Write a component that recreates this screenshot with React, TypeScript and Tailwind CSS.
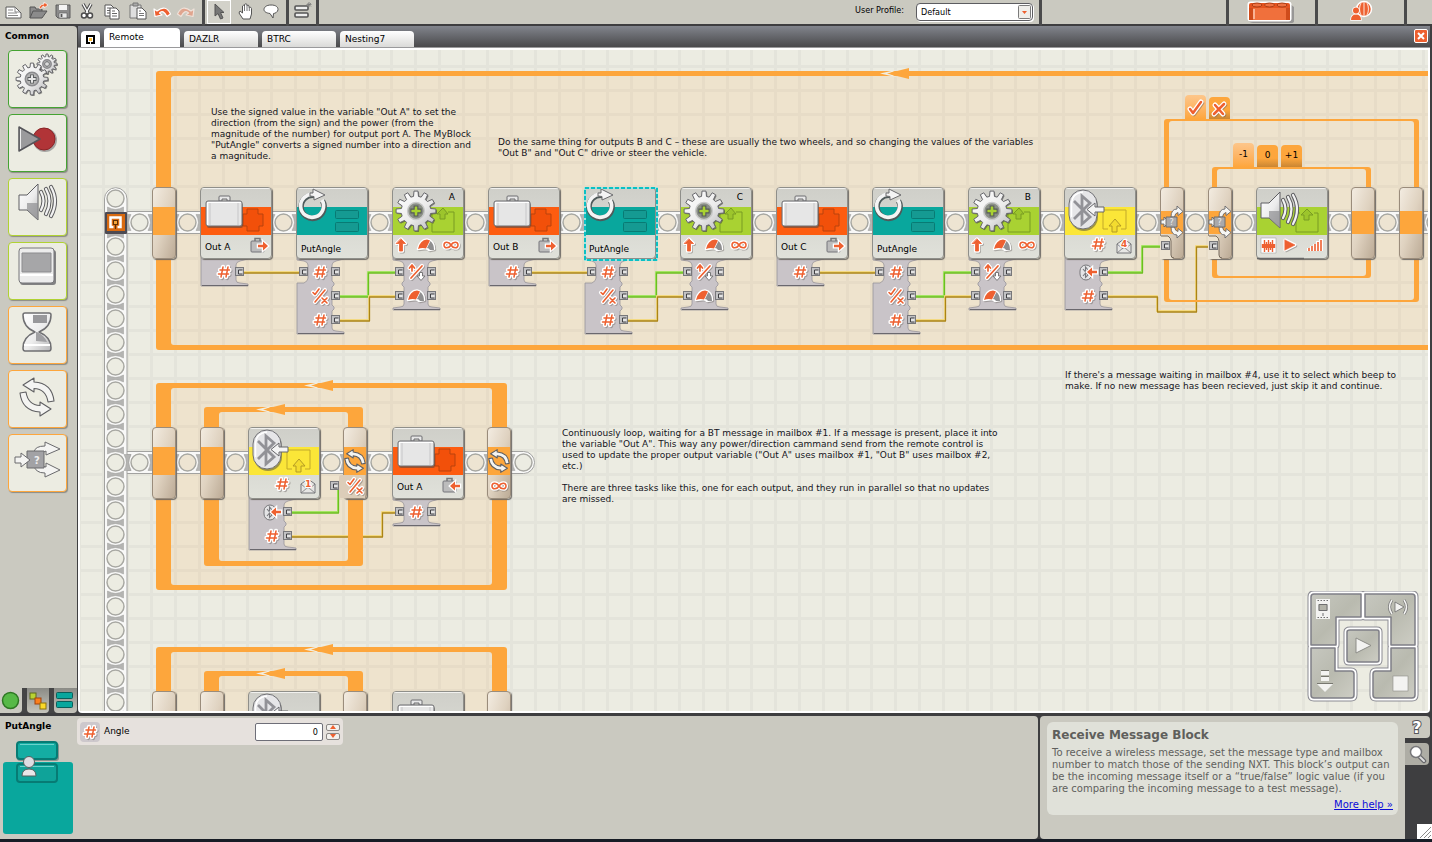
import React from "react";

/* ---------- shared values ---------- */

const ORANGE = "#fda63c";
const INK = "#ee6030";
const TINT = "#ede4d2";
const PAPER = "#ecece2";
const TEAL = "#09a79d";

const ORIGIN = { x: 80, y: 50 };
const at = (x: number, y: number) => ({ left: x - ORIGIN.x, top: y - ORIGIN.y });

/* ---------- small glyphs, centred on 0,0 ---------- */

type GlyphProps = { x: number; y: number };

const outlined = {
  paintOrder: "stroke",
  stroke: "#fff",
  strokeWidth: 3,
  strokeLinejoin: "round" as const,
  fontFamily: "DejaVu Sans, sans-serif",
  textAnchor: "middle" as const,
};

const Hash = ({ x, y }: GlyphProps) => (
  <g transform={`translate(${x} ${y})`} fill="none" strokeLinecap="round">
    {[
      { c: "#6f6a68", w: 4.2, o: 0.5, t: "translate(1 1)" },
      { c: "#fff", w: 4.4, o: 1, t: "" },
      { c: INK, w: 1.5, o: 1, t: "" },
    ].map((l) => (
      <path key={l.c} d="M-1-5L-3 5M4-5L2 5M-4-2H5.500M-5.500 2H4.500" stroke={l.c} strokeWidth={l.w} opacity={l.o} transform={l.t || undefined} />
    ))}
  </g>
);

const Outline = ({ d, x, y, fill = "none", w = 2 }: GlyphProps & { d: string; fill?: string; w?: number }) => (
  <g transform={`translate(${x} ${y})`} strokeLinejoin="round" strokeLinecap="round">
    <path d={d} transform="translate(1 1)" stroke="#6f6a68" strokeWidth={w + 2} fill={fill} opacity=".5" />
    <path d={d} stroke="#fff" strokeWidth={w + 2.5} fill={fill} />
    <path d={d} stroke={INK} strokeWidth={w} fill={fill} />
  </g>
);

const UpArrow = (p: GlyphProps) => <Outline {...p} d="M0-6L4.500-1.500H1.500V6H-1.500V-1.500H-4.500Z" fill={INK} w={0.8} />;
const Infinity8 = (p: GlyphProps) => <Outline {...p} d="M0 0C-2-3.500-7-4-7 0S-2 3.500 0 0S7-4 7 0S2 3.500 0 0Z" w={1.6} />;
const Gauge = ({ x, y }: GlyphProps) => (
  <g transform={`translate(${x} ${y})`} strokeLinejoin="round">
    <path d="M-8 4Q-6-5 1-5.500Q8-4 8 4L3 5L0 3Z" fill="#77726f" stroke="#77726f" strokeWidth="2.500" opacity=".5" transform="translate(1 1)" />
    <path d="M-8 4Q-6-5 1-5.500Q8-4 8 4L3 5L0 3Z" fill="#fff" stroke="#fff" strokeWidth="2.500" />
    <path d="M4.500-4Q8-1 8 5H4Q3 3 1 3Z" fill="#8f8f90" />
    <path d="M-8 4Q-6-5 1-5.500L4-4.500L0 3.500Q-4 2.500-8 4Z" fill={INK} />
  </g>
);
const TrueFalse = ({ x, y }: GlyphProps) => <Outline x={x} y={y} d="M-7-3.500L-5-1.500L-1-7M-5 6L5-6M2 2L7 7M7 2L2 7" w={1.6} />;
const UpDown = ({ x, y }: GlyphProps) => (
  <g>
    <Outline x={x} y={y} d="M-5 6L6-6M-4-1V-6M-6.500-4L-4-7L-1.500-4" w={1.7} />
    <path transform={`translate(${x + 5} ${y + 4})`} d="M-1.500-3.500H1.500V0H4L0 4.500L-4 0H-1.500Z" fill="#fff" stroke="#777" />
  </g>
);
const OrangeArrow = ({ x, y, flip = false }: GlyphProps & { flip?: boolean }) => (
  <g transform={`translate(${x} ${y})${flip ? " scale(-1 1)" : ""}`}>
    <path d="M-5-1.200H0V-4.500L5 0L0 4.500V1.200H-5Z" fill={INK} stroke="#fff" strokeWidth="2.500" paintOrder="stroke" />
  </g>
);
const MiniCase = ({ x, y, flip }: GlyphProps & { flip?: boolean }) => (
  <g transform={`translate(${x} ${y})`}>
    <path d="M-5-4V-6.500H0V-4" fill="none" stroke="#777" strokeWidth="1.500" />
    <rect x="-9" y="-4" width="13" height="11" rx="1" fill="#bcbcbc" stroke="#75757a" />
    <OrangeArrow x={3} y={1} flip={flip} />
  </g>
);
const Envelope = ({ x, y, n }: GlyphProps & { n: string }) => (
  <g transform={`translate(${x} ${y})`}>
    <path d="M-7-1L0-6L7-1V8H-7Z" fill="#e6e6e4" stroke="#77777a" />
    <path d="M-7 8L-1 3H1L7 8M-7-1L-1 4M7-1L1 4" fill="none" stroke="#77777a" strokeWidth=".8" />
    <text {...outlined} strokeWidth={2.4} x="0" y="2" fontSize="9" fontWeight="bold" fill={INK}>{n}</text>
  </g>
);
const MiniBluetooth = ({ x, y }: GlyphProps) => (
  <g transform={`translate(${x} ${y})`}>
    <rect x="-8" y="-7" width="12" height="15" rx="6" fill="#e4e4e6" stroke="#77777a" />
    <path d="M-5-3L0 3L-2.500 5.500V-5L0-2L-5 4" fill="none" stroke="#77777c" strokeWidth="1.100" />
    <OrangeArrow x={4} y={0} flip />
  </g>
);
const SoundGlyphs = () => (
  <g>
    <rect x="5" y="51" width="15" height="15" fill="#fff" stroke="#999" strokeWidth=".5" />
    <path
      d="M6.500 57V61M8.500 53V65M10.500 55V63M12.500 53V65M14.500 55V63M16.500 53V65M18.500 57V61"
      fill="none"
      stroke={INK}
      strokeWidth="1.400"
    />
    <path d="M6 59H19" stroke={INK} strokeWidth="4" />
    <Outline x={33} y={58} d="M-4-5L6 0L-4 5Z" fill={INK} w={0.6} />
    <path d="M53 64V61M56 64V59M59 64V57M62 64V54M65 64V52" stroke="#fff" strokeWidth="4" />
    <path d="M53 64V61M56 64V59M59 64V57M62 64V55M65 64V53" stroke={INK} strokeWidth="1.600" />
  </g>
);

/* ---------- large drawings ---------- */

function gearPath(cx: number, cy: number, outer: number, inner: number, teeth: number) {
  const points: string[] = [];
  for (let i = 0; i < teeth; i++) {
    const step = (Math.PI * 2) / teeth;
    const a = i * step - Math.PI / 2;
    [[-0.32, inner], [-0.19, outer], [0.19, outer], [0.32, inner]].forEach(([k, r]) => {
      points.push(`${(cx + Math.cos(a + k * step) * r).toFixed(2)} ${(cy + Math.sin(a + k * step) * r).toFixed(2)}`);
    });
  }
  return `M${points.join("L")}Z`;
}

const Gear = ({ x, y, r, hub = "#b4b4b4", plus = "#e8e8e8", ring = "#8b8b8e" }: { x: number; y: number; r: number; hub?: string; plus?: string; ring?: string }) => (
  <g>
    <path d={gearPath(x + 1, y + 1, r, r * 0.74, 12)} fill="#444" opacity=".6" />
    <path d={gearPath(x, y, r, r * 0.74, 12)} fill="url(#metal)" stroke="#66666a" strokeLinejoin="round" />
    <circle cx={x} cy={y} r={r * 0.42} fill={hub} stroke={ring} strokeWidth="1.500" />
    <path d={`M${x - r * 0.28} ${y}H${x + r * 0.28}M${x} ${y - r * 0.28}V${y + r * 0.28}`} stroke="#55585a" strokeWidth={r * 0.24} />
    <path d={`M${x - r * 0.23} ${y}H${x + r * 0.23}M${x} ${y - r * 0.23}V${y + r * 0.23}`} stroke={plus} strokeWidth={r * 0.13} />
  </g>
);

const Suitcase = () => (
  <g stroke="#6d6d70">
    <path d="M19 14V10Q19 9 20 9H29Q30 9 30 10V14H27V12H22V14Z" fill="#e8e8e8" />
    <rect x="7" y="16" width="36" height="25" rx="2" fill="#444" opacity=".5" stroke="none" />
    <rect x="6" y="14" width="36" height="25" rx="2" fill="#e6e6e6" />
    <path d="M10 15V38M38 15V38" stroke="#c6c6c8" />
    <path d="M7 15.500H41M7.500 15V38" stroke="#fff" />
  </g>
);

const Redo = () => (
  <g fill="none" strokeLinejoin="round">
    <path d="M18 7.500A11.500 11.500 0 1 0 26 13" transform="translate(.5 1)" stroke="#4f5a5a" strokeWidth="5.500" />
    <path d="M18 7.500A11.500 11.500 0 1 0 26 13" stroke="#f4f4f4" strokeWidth="3.600" />
    <path d="M17 2L29 8L18 13V9.500L14 9V6L17 6Z" fill="#f4f4f4" stroke="#6a6a6d" />
  </g>
);

const Bluetooth = () => (
  <g>
    <rect x="6" y="5" width="28" height="39" rx="14" fill="#444" opacity=".5" />
    <rect x="5" y="3" width="28" height="39" rx="14" fill="#e6e6e8" stroke="#707074" />
    <path d="M7.500 30V16Q8.500 6 19 5" fill="none" stroke="#fff" strokeWidth="1.500" />
    <path d="M10 14L26 30L18 37V9L26 16L10 32" fill="none" stroke="#929297" strokeWidth="2.800" />
    <path d="M40 20V25H31V29L23 22.500L31 16V20Z" fill="#f4f4f4" stroke="#66666a" />
  </g>
);

const Speaker = () => (
  <g>
    <path d="M27 13Q32 22 27 31M32 10Q39 22 32 35M37 8Q45 22 37 37" fill="none" stroke="#5d5d60" strokeWidth="4.200" strokeLinecap="round" />
    <path d="M27 13Q32 22 27 31M32 10Q39 22 32 35M37 8Q45 22 37 37" fill="none" stroke="#f2f2f2" strokeWidth="2.200" strokeLinecap="round" />
    <path d="M5 16H13L24 5V41L13 31H5Z" fill="url(#metal)" stroke="#5f5f62" strokeLinejoin="round" />
    <path d="M13 31L24 41V24H13Z" fill="#8f8f92" opacity=".7" />
  </g>
);

const CycleArrows = ({ x, y, s = 1 }: GlyphProps & { s?: number }) => (
  <g transform={`translate(${x} ${y}) scale(${s})`} strokeLinejoin="round">
    {[0, 180].map((turn) => (
      <path
        key={turn}
        transform={`rotate(${turn})`}
        d="M-14-12L-3-19V-15Q15-14 17 4L11 5Q9-8-3-8.500V-5Z"
        fill="#f4f4f2"
        stroke="#5f5f62"
        strokeWidth={1.1 / s}
      />
    ))}
  </g>
);

const Fork = ({ x, y }: GlyphProps) => (
  <g transform={`translate(${x} ${y})`} strokeLinejoin="round" fill="#f6f6f4" stroke="#66666a" strokeWidth=".9">
    <path d="M-1-5Q-1-13 5-13V-16L11-10.500L6-6.500V-9.500Q3-9 2.500-5Z" />
    <path d="M-1 5Q-1 13 5 13V16L11 10.500L6 6.500V9.500Q3 9 2.500 5Z" />
    <path d="M-11-2H-8V-5L-3 0L-8 5V2H-11Z" />
    <rect x="-6" y="-5" width="11" height="10" fill="#a9a9ab" />
    <text x="-.5" y="3" fontSize="8" textAnchor="middle" fill="#eee" stroke="none" fontFamily="DejaVu Sans, sans-serif">?</text>
  </g>
);

/* ---------- canvas background drawing ---------- */

const Hole = ({ x, y, tinted }: GlyphProps & { tinted?: boolean }) => (
  <g>
    <circle cx={x} cy={y} r="10" fill="#fff" />
    <circle cx={x} cy={y} r="8.500" fill={tinted ? TINT : PAPER} stroke="#a8a8a2" strokeWidth="1.500" />
  </g>
);

const Rung = ({ x, y, turn }: GlyphProps & { turn?: boolean }) => (
  <path
    transform={`translate(${x} ${y})${turn ? " rotate(90)" : ""}`}
    d="M-8-3.500Q0 1 8-3.500V3.500Q0-1-8 3.500Z"
    fill="#b4b4b2"
    stroke="#9d9d9b"
    strokeWidth=".5"
  />
);

const steps = (n: number) => Array.from({ length: n }, (_, i) => i);

const Row = ({ y, holes, tintedFrom, tintedTo, closed }: { y: number; holes: number; tintedFrom: number; tintedTo: number; closed?: boolean }) => {
  const end = 139.5 + (holes - 1) * 24 + 12;
  return (
    <g>
      <path d={closed ? `M122 ${y - 11}H${end - 12}A11 11 0 0 1 ${end - 12} ${y + 11}H122Z` : `M122 ${y - 11}H${end}V${y + 11}H122Z`} fill="#f8f8f7" stroke="#a2a2a0" />
      {steps(holes).map((i) => (
        <Rung key={i} x={127.5 + i * 24} y={y} turn />
      ))}
      {steps(holes).map((i) => {
        const x = 139.5 + i * 24;
        return <Hole key={i} x={x} y={y} tinted={x > tintedFrom && x < tintedTo} />;
      })}
    </g>
  );
};

const Spine = () => (
  <g>
    <path d="M104.500 800V199A11 11 0 0 1 127 199V800" fill="#f8f8f7" stroke="#a2a2a0" />
    {steps(22).map((i) => (
      <Rung key={i} x={115.5} y={210.5 + i * 24} />
    ))}
    {steps(22).map((i) => (
      <Hole key={i} x={115.5} y={198.5 + i * 24} />
    ))}
  </g>
);

const Arrow = ({ x, y }: GlyphProps) => (
  <g>
    <path d={`M${x - 29} ${y}L${x - 11} ${y - 4}L${x - 20} ${y}L${x - 11} ${y + 4}Z`} fill="#f2eee0" />
    <path d={`M${x - 22} ${y}L${x} ${y - 5.5}V${y + 5.5}Z`} fill={ORANGE} />
  </g>
);

type FrameProps = { x: number; y: number; w: number; h: number; side: number; edge: number; tint?: boolean; arrow?: number };

const Frame = ({ x, y, w, h, side, edge, tint, arrow }: FrameProps) => {
  const r = 3;
  const ix = x + side, iy = y + edge, iw = w - side * 2, ih = h - edge * 2;
  return (
    <g>
      {tint && <rect x={ix} y={iy} width={iw} height={ih} fill={ORANGE} opacity=".12" />}
      <path
        fillRule="evenodd"
        fill={ORANGE}
        d={`M${x + r} ${y}H${x + w - r}Q${x + w} ${y} ${x + w} ${y + r}V${y + h - r}Q${x + w} ${y + h} ${x + w - r} ${y + h}H${x + r}Q${x} ${y + h} ${x} ${y + h - r}V${y + r}Q${x} ${y} ${x + r} ${y}Z
        M${ix + r} ${iy}H${ix + iw - r}Q${ix + iw} ${iy} ${ix + iw} ${iy + r}V${iy + ih - r}Q${ix + iw} ${iy + ih} ${ix + iw - r} ${iy + ih}H${ix + r}Q${ix} ${iy + ih} ${ix} ${iy + ih - r}V${iy + r}Q${ix} ${iy} ${ix + r} ${iy}Z`}
      />
      {arrow && <Arrow x={arrow} y={y + edge / 2} />}
    </g>
  );
};

const Wire = ({ d, tone }: { d: string; tone: "green" | "gold" }) => (
  <g fill="none" strokeLinejoin="round">
    <path d={d} transform="translate(-.5 -.5)" stroke={tone === "green" ? "#a5e564" : "#f3d980"} strokeWidth="2" />
    <path d={d} transform="translate(0 .5)" stroke={tone === "green" ? "#6cbf20" : "#ab8416"} strokeWidth="1.300" />
  </g>
);

const Hub = () => (
  <g>
    <rect x="105" y="212" width="22" height="22" rx="1" fill="#4c4a52" />
    <rect x="107" y="214" width="18" height="17" fill="#d96a10" />
    <path d="M113.500 227H110.500V217.500H120.500V227H117.500" fill="none" stroke="#fff" strokeWidth="2.500" />
    <rect x="113.500" y="220.500" width="4" height="4" fill="#f3a63c" stroke="#5f3005" />
    <path d="M115.500 225V229" stroke="#5f3005" />
  </g>
);

const Backdrop = () => (
  <svg className="absolute inset-0 h-full w-full" aria-hidden="true">
    <defs>
      <linearGradient id="metal" x1="0" y1="0" x2="1" y2="1">
        <stop offset="0" stopColor="#ffffff" />
        <stop offset=".55" stopColor="#ececec" />
        <stop offset="1" stopColor="#b5b5b7" />
      </linearGradient>
    </defs>
    <g transform={`translate(${-ORIGIN.x} ${-ORIGIN.y})`}>
      <Frame x={156} y={71} w={2400} h={279} side={15} edge={5} tint arrow={909} />
      <Frame x={156} y={383} w={351} h={207} side={15} edge={5} tint arrow={333} />
      <Frame x={156} y={647} w={351} h={207} side={15} edge={5} tint arrow={333} />
      <Row y={222.5} holes={90} tintedFrom={160} tintedTo={3000} />
      <Row y={462.5} holes={17} tintedFrom={160} tintedTo={500} closed />
      <Spine />
      <Rung x={127.5} y={462.5} turn />
      <Hub />
      {[0, 96 * 3, 96 * 6].map((dx) => (
        <g key={dx}>
          <Wire tone="gold" d={`M${dx + 242} 272.500H${dx + 302}`} />
          <Wire tone="green" d={`M${dx + 338} 296.500H${dx + 368.5}V272.500H${dx + 398}`} />
          <Wire tone="gold" d={`M${dx + 338} 320.500H${dx + 369.5}V296.500H${dx + 398}`} />
        </g>
      ))}
      <Wire tone="gold" d="M1106 296.500H1157.500V311.500H1196.500V246.500H1214" />
      <Wire tone="gold" d="M290 536.500H382.500V512.500H398" />
      <Frame x={204} y={407} w={159} h={159} side={15} edge={5} arrow={285} />
      <Frame x={204} y={671} w={159} h={159} side={15} edge={5} arrow={285} />
      <Wire tone="green" d="M290 512.500H338.500V488" />
      <Frame x={1164} y={119} w={255} h={183} side={5} edge={2} />
      <Frame x={1212} y={167} w={159} h={111} side={5} edge={2} />
      <Wire tone="green" d="M1106 272.500H1142.500V246.500H1166" />
    </g>
  </svg>
);

/* ---------- blocks ---------- */

type PlugShape = "right" | "mixed" | "both";

function plugPath(rows: number, shape: PlugShape) {
  const H = 31 + 24 * (rows - 1);
  const gaps = steps(rows - 1).map((i) => 29 + i * 24);
  const right = gaps.map((g) => `V${g - 3}L38 ${g - 1}V${g + 1}L36 ${g + 3}`).join("");
  let left = "V0";
  if (shape === "mixed") left = "V28H8Q12 26 12 23V10Q12 7 8 6L1 5V0";
  if (shape === "both") {
    left = `V${H - 2}L8 ${H - 3}Q12 ${H - 3} 12 ${H - 6}` + [...gaps].reverse().map((g) => `V${g + 3}L10 ${g + 1}V${g - 1}L12 ${g - 3}`).join("") + "V10Q12 7 8 6L1 5V0";
  }
  return `M1 0H48V4L40 6Q36 7 36 10${right}V${H - 6}Q36 ${H - 3} 40 ${H - 3}L48 ${H - 2}V${H}H1${left}Z`;
}

const Port = ({ x, y }: GlyphProps) => (
  <g transform={`translate(${x} ${y})`}>
    <rect x="-4.500" y="-4.500" width="8" height="8" fill="#c2c2c4" stroke="#77777a" />
    <path d="M2.500-2H-1.500V2H2.500" fill="#e4e4e4" stroke="#3f3f43" />
  </g>
);

const Plug = ({ rows, shape, icons }: { rows: number; shape: PlugShape; icons: React.FC<GlyphProps>[] }) => (
  <svg className="absolute left-0 top-[68px]" width="56" height="84" aria-hidden="true">
    <path d={plugPath(rows, shape)} fill="#c9c4c8" stroke="#98949a" strokeWidth=".8" />
    <path d={`M2 ${30 + 24 * (rows - 1)}.500H48`} stroke="#6a686e" />
    {steps(rows).map((i) => {
      const Icon = icons[i];
      const hasLeft = shape === "both" || (shape === "mixed" && i === 0);
      return (
        <g key={i}>
          <Port x={40} y={17 + i * 24} />
          {hasLeft && <Port x={8} y={17 + i * 24} />}
          <Icon x={24} y={17 + i * 24} />
        </g>
      );
    })}
  </svg>
);

const BAND = {
  variable: "bg-[#fd5c10]",
  custom: "bg-[#09a79d]",
  motor: "bg-[#a9d232]",
  message: "bg-[#fbe638]",
  sound: "bg-[#a9d232]",
};

type BlockProps = {
  kind: keyof typeof BAND;
  x: number;
  y?: number;
  label?: string;
  letter?: string;
  mailbox?: string;
  write?: boolean;
  selected?: boolean;
  topOnly?: boolean;
};

const Block = ({ kind, x, y = 187, label, letter, mailbox = "1", write, selected, topOnly }: BlockProps) => (
  <div className="absolute" style={at(x, y)}>
    {!topOnly && kind === "variable" && <Plug rows={1} shape={write ? "both" : "right"} icons={[Hash]} />}
    {kind === "custom" && <Plug rows={3} shape="mixed" icons={[Hash, TrueFalse, Hash]} />}
    {kind === "motor" && <Plug rows={2} shape="both" icons={[UpDown, Gauge]} />}
    {!topOnly && kind === "message" && <Plug rows={2} shape="right" icons={[MiniBluetooth, Hash]} />}
    <div className="relative flex h-[72px] w-[72px] flex-col overflow-hidden rounded border border-[#8f8f8a] bg-gradient-to-b from-[#cfcfc9] to-[#e0e1da] shadow-[1px_1px_1px_#6f6b66]">
      <div className="h-[19px] shrink-0 border-t border-white/70 pr-2 text-right text-[9px] leading-4 text-black">{letter}</div>
      <div className={`h-7 shrink-0 ${BAND[kind]}`} />
      <div className={`px-1 text-[9px] leading-[11px] text-black ${kind === "custom" ? "pt-[9px]" : "pt-[7px]"}`}>
        {label}
      </div>
    </div>
    <svg className="absolute left-0 top-0" width="74" height="74" aria-hidden="true">
      {kind === "variable" && (
        <g>
          <path d="M47 22H58V27H63V39H59V44H47V39H43V27H47Z" fill="#f2500a" stroke="#b9420c" />
          <Suitcase />
          {!topOnly && <MiniCase x={60} y={58} flip={write} />}
        </g>
      )}
      {kind === "custom" && (
        <g>
          <rect x="39.500" y="23.500" width="23" height="8" rx="1" fill="#159a92" stroke="#087b74" />
          <rect x="39.500" y="35.500" width="23" height="9" rx="1" fill="#159a92" stroke="#087b74" />
          <Redo />
        </g>
      )}
      {kind === "motor" && (
        <g>
          <path d="M45 25H40V45H62V25H56" fill="none" stroke="#799b22" />
          <path d="M51 21L56 27H53V32H48V27H45Z" fill="#9cc52c" stroke="#799b22" />
          <Gear x={24} y={24} r={20} hub="#8a8f86" plus="#a9d232" ring="#c9c9c9" />
          <UpArrow x={9} y={58} />
          <Gauge x={34} y={58} />
          <Infinity8 x={59} y={58} />
        </g>
      )}
      {kind === "message" && (
        <g>
          <path d="M44 42H39V23H62V42H57" fill="none" stroke="#c2a92b" />
          <path d="M51 32L57 39H53V45H48V39H45Z" fill="#f3dc2f" stroke="#b39a25" />
          <Bluetooth />
          {!topOnly && <Hash x={34} y={57} />}
          {!topOnly && <Envelope x={60} y={58} n={mailbox} />}
        </g>
      )}
      {kind === "sound" && (
        <g>
          <path d="M44 26H40V45H62V26H58" fill="none" stroke="#799b22" />
          <path d="M51 22L57 28H53V33H48V28H45Z" fill="#9cc52c" stroke="#799b22" />
          <Speaker />
          <SoundGlyphs />
          <path d="M1 71.500H48" stroke="#666" strokeWidth="1.500" />
        </g>
      )}
      {selected && (
        <g fill="none" strokeWidth="2">
          <rect x="1" y="1" width="72" height="72" stroke="#9fe3e0" />
          <rect x="1" y="1" width="72" height="72" stroke="#0bc0c4" strokeDasharray="4 2" />
        </g>
      )}
    </svg>
  </div>
);

type PostProps = { x: number; y?: number; mark?: "fork" | "until" | "forever" | "narrow" };

const Post = ({ x, y = 187, mark }: PostProps) => {
  const narrow = mark === "fork" || mark === "narrow";
  return (
    <div className="absolute" style={at(x, y)}>
      <div className="flex h-[72px] w-6 flex-col overflow-hidden rounded border border-[#9a8c7b] bg-gradient-to-br from-[#f3ece1] via-[#dfd2c0] to-[#bcab96] shadow-[1px_1px_1px_#6f6b66]">
        <div className={narrow ? "h-[23px] shrink-0" : "h-[19px] shrink-0"} />
        <div className={`shrink-0 bg-[#fda63c] ${narrow ? "h-[23px]" : "h-7"}`} />
      </div>
      <svg className="absolute -left-4 top-0" width="44" height="74" aria-hidden="true">
        {mark === "fork" && (
          <g>
            <path d="M16 49H24Q27 51 27 54V68Q27 71 30 72H16Z" fill={TINT} />
            <path d="M17 49H24Q27 51 27 54V68Q27 71 30 71" fill="none" stroke="#75695c" />
            <Port x={22} y={59} />
            <Fork x={28} y={35} />
          </g>
        )}
        {mark === "until" && (
          <g>
            <path d="M14 48H38V71H14Q12 71 12 68V51Q12 48 14 48Z" fill="#dccdb9" />
            <Port x={8} y={59} />
            <CycleArrows x={28} y={34} s={0.6} />
            <TrueFalse x={28} y={59} />
          </g>
        )}
        {mark === "forever" && (
          <g>
            <CycleArrows x={28} y={34} s={0.6} />
            <Infinity8 x={28} y={59} />
          </g>
        )}
      </svg>
    </div>
  );
};

const Note = ({ x, y, lines }: { x: number; y: number; lines: string[] }) => (
  <p className="absolute text-[9px] leading-[11px] whitespace-pre text-[#14141c]" style={at(x, y)}>
    {lines.join("\n")}
  </p>
);

const Tab = ({ x, y, on, children }: { x: number; y: number; on?: boolean; children: React.ReactNode }) => (
  <button
    className={`absolute flex w-[21px] items-center justify-center rounded-t text-[9px] text-black ${
      on ? "h-6 bg-gradient-to-b from-[#fdc68a] to-[#fda63c]" : "h-[22px] bg-gradient-to-b from-[#fda63c] from-60% to-[#c98633]"
    }`}
    style={at(x, y)}
  >
    {children}
  </button>
);

/* ---------- controller ---------- */

const PADS = [
  "M6 3H53V26H28V54H3V6Q3 3 6 3Z",
  "M57 3H104Q107 3 107 6V54H83V26H57Z",
  "M3 57H27V80H43Q46 80 46 83V104Q46 107 43 107H6Q3 107 3 104Z",
  "M83 57H107V104Q107 107 104 107H68Q65 107 65 104V83Q65 80 68 80H83Z",
  "M42 39H69Q71 39 71 41V69Q71 71 69 71H41Q39 71 39 69V41Q39 39 42 39Z",
];

const Controller = () => (
  <div className="absolute right-[9px] bottom-[8px] h-[112px] w-[112px]">
    <svg width="112" height="112" viewBox="-1 0 112 112" aria-hidden="true">
      <defs>
        <linearGradient id="pad" x1="0" y1="0" x2="1" y2="1">
          <stop offset="0" stopColor="#c6c7bf" />
          <stop offset=".5" stopColor="#b9baaf" />
          <stop offset="1" stopColor="#cdcdc4" />
        </linearGradient>
      </defs>
      <g strokeLinejoin="round">
        {PADS.map((d) => <path key={d} d={d} stroke="#8a8a92" strokeWidth="7" fill="none" />)}
        {PADS.map((d) => <path key={d} d={d} stroke="#fff" strokeWidth="5" fill="none" />)}
        {PADS.map((d) => <path key={d} d={d} stroke="#7f7f86" strokeWidth="1.500" fill="url(#pad)" />)}
      </g>
      <g fill="#f3f3f1">
        <path fillRule="evenodd" d="M8 8H22V28H8ZM10.500 13V20H19.500V13Z" />
        <path d="M9.500 9.500H21M9.500 26.500H21" stroke="#6f6f70" strokeDasharray="1.500 1.500" />
        <path d="M11 13.500H19V19.500H11Z" fill="#b3b3a9" stroke="#6f6f70" />
        <path d="M15 22V25" stroke="#6f6f70" />
        <path d="M48 47L63 54.500L48 62Z" stroke="#8d8d88" />
        <path d="M87 11L96 16L87 21Z" stroke="#6f6f70" strokeWidth=".8" />
        <path d="M84 9Q79 16 84 23M96 9Q101 16 96 23" fill="none" stroke="#6f6f70" strokeWidth="3" />
        <path d="M84 9Q79 16 84 23M96 9Q101 16 96 23" fill="none" stroke="#f3f3f1" strokeWidth="1.600" />
        <path d="M13 80H21V84H13ZM13 86H21V90H13ZM9 93H25L17 101Z" />
        <path d="M13 79.500H21M13 85.500H21M9 92.500H25" stroke="#77776f" fill="none" />
        <rect x="85" y="85" width="15" height="15" stroke="#8d8d88" strokeWidth=".6" />
      </g>
    </svg>
    <div className="absolute inset-0 grid grid-cols-2 grid-rows-2">
      <button aria-label="NXT window" />
      <button aria-label="Download and run selected" />
      <button aria-label="Download" />
      <button aria-label="Stop" />
    </div>
    <button aria-label="Download and run" className="absolute top-[38px] left-[38px] h-8 w-8" />
  </div>
);

/* ---------- toolbar ---------- */

const ToolButton = ({ label, on, wide, children }: { label: string; on?: boolean; wide?: boolean; children: React.ReactNode }) => (
  <button aria-label={label} className={`flex h-6 shrink-0 items-center justify-center ${wide ? "w-[26px]" : "w-6"} ${on ? "border border-white bg-[#d3d2ca]" : ""}`}>
    <svg width="22" height="22" viewBox="0 0 22 22" strokeLinejoin="round">{children}</svg>
  </button>
);

const Divider = () => (
  <div className="h-[26px] w-[3px] shrink-0 rounded-b bg-[#4a4a4b]" />
);

const Toolbar = () => (
  <header className="flex h-6 shrink-0 items-start bg-[#cac9c0]">
    <div className="flex w-[202px] shrink-0 justify-between pr-[4px] pl-[1px]">
      <ToolButton label="New program">
        <path d="M4 6H13L19 12V17H4Z" fill="#fff" stroke="#5b5b5b" />
        <path d="M13 6V11H18M6 9H11M6 12H15M6 14.500H16" fill="none" stroke="#8b8b8b" />
      </ToolButton>
      <ToolButton label="Open program" wide>
        <path d="M3 17V6H8L9 8H15V11" fill="#8d8d8d" stroke="#555" />
        <path d="M3 17L6 10H20L15 17Z" fill="#8b8b8b" stroke="#555" />
        <path d="M12 7Q13 3 17 3V1L21 4L17 7V5Q15 5 14 8Z" fill={INK} stroke="#fff" strokeWidth=".7" />
      </ToolButton>
      <ToolButton label="Save program">
        <path d="M4 4H18V17H6L4 15Z" fill="#8b8b8b" stroke="#5d5d5d" />
        <path d="M7 4H15V9H7Z" fill="#f4f4f4" />
        <path d="M7 12H15V17H7Z" fill="#e9e9e9" stroke="#666" strokeWidth=".7" />
        <path d="M9.500 13V16" stroke="#555" strokeWidth="1.800" />
      </ToolButton>
      <ToolButton label="Cut">
        <path d="M7 3L12 12M15 3L10 12" stroke="#4b4b4b" strokeWidth="3.500" />
        <path d="M7 3L12 12M15 3L10 12" stroke="#fff" strokeWidth="1.400" />
        <circle cx="8" cy="14.500" r="2.500" fill="#fff" stroke="#4b4b4b" strokeWidth="1.500" />
        <circle cx="14" cy="14.500" r="2.500" fill="#fff" stroke="#4b4b4b" strokeWidth="1.500" />
      </ToolButton>
      <ToolButton label="Copy" wide>
        <path d="M3 4H9L12 7V15H3Z" fill="#fff" stroke="#555" />
        <path d="M5 7H8M5 9.500H8M5 12H8" stroke="#666" />
        <path d="M8 7H14L17 10V18H8Z" fill="#fff" stroke="#555" />
        <path d="M10 10H13M10 12.500H15M10 15H15" stroke="#666" />
      </ToolButton>
      <ToolButton label="Paste">
        <rect x="3" y="4" width="11" height="13" fill="#dedede" stroke="#777" />
        <rect x="6" y="2" width="5" height="3" fill="#aaa" stroke="#777" />
        <path d="M10 7H15L19 11V18H10Z" fill="#fff" stroke="#555" />
        <path d="M12 10H14M12 12.500H17M12 14.500H17" stroke="#777" />
      </ToolButton>
      <ToolButton label="Undo">
        <path d="M3 8L4 15.500L11 14L8.500 12Q12 8 16 15.500L19.500 13Q15 3 6 10Z" fill={INK} stroke="#fff" strokeWidth="1.200" />
      </ToolButton>
      <ToolButton label="Redo">
        <path d="M19 8L18 15.500L11 14L13.500 12Q10 8 6 15.500L2.500 13Q7 3 16 10Z" fill="#e0a58f" stroke="#efe2da" strokeWidth="1.200" />
      </ToolButton>
    </div>
    <Divider />
    <div className="flex w-[81px] shrink-0 justify-between px-[2px]">
      <ToolButton label="Pointer" on>
        <path d="M7 3V15L10 12.500L12.500 18L15 17L12.500 11.500H16Z" fill="#777" stroke="#555" />
      </ToolButton>
      <ToolButton label="Pan">
        <path d="M8 18L4 12L5 10L7.500 12V5Q8.500 3.500 9.500 5V3.500Q11 2 12 3.500V4.500Q13.500 3.500 14 5V6.500Q16 5.500 16.500 7.500V13L15 18Z" fill="#fff" stroke="#555" />
        <path d="M9.500 5V10M12 4V10M14.300 6V10" stroke="#777" />
      </ToolButton>
      <ToolButton label="Comment">
        <path d="M10 4C15 4 17 6 17 8.500S14 12.500 12.500 12.500L12 17L9 12.500C5 12 3 10.500 3 8.500S5 4 10 4Z" fill="#fff" stroke="#555" />
      </ToolButton>
    </div>
    <Divider />
    <div className="flex w-[27px] shrink-0 justify-center">
      <ToolButton label="Create My Block">
        <rect x="3" y="5" width="13" height="4" rx="1" fill="#eee" stroke="#555" strokeWidth="1.600" />
        <rect x="3" y="12" width="13" height="4" rx="1" fill="#eee" stroke="#555" strokeWidth="1.600" />
        <path d="M17 1V6M14.500 3.500H19.500M15.500 2L19 5.500M19 2L15.500 5.500" stroke="#777" strokeWidth=".8" />
      </ToolButton>
    </div>
    <Divider />
    <div className="flex h-6 flex-1 items-center justify-end pr-[6px]">
      <label htmlFor="profile" className="mr-3 pb-[2px] text-[9px] text-black font-[family-name:'DejaVu_Sans_Condensed','DejaVu_Sans',sans-serif]">User Profile:</label>
      <div className="relative flex">
        <select id="profile" className="h-[18px] w-[117px] appearance-none rounded-sm border border-[#5c5c60] bg-white py-0 pl-1 text-[9px] leading-4 text-black shadow-[1px_1px_0_#fff] font-[family-name:'DejaVu_Sans_Condensed','DejaVu_Sans',sans-serif]">
          <option>Default</option>
        </select>
        <svg className="pointer-events-none absolute top-[2px] right-[2px]" width="13" height="14" aria-hidden="true">
          <rect x=".5" y=".5" width="12" height="13" rx="1" fill="#efeeea" stroke="#7b7b7b" />
          <path d="M4 6H9L6.500 9Z" fill={INK} />
        </svg>
      </div>
    </div>
    <Divider />
    <div className="w-[184px] shrink-0" />
    <Divider />
    <button aria-label="Robo Center" className="flex h-6 w-[86px] shrink-0 items-center justify-center pr-[4px]">
      <svg width="48" height="24" viewBox="0 0 48 24">
        <path d="M5 3Q5 1 7 1H41Q43 1 43 3L47 6V20Q47 22 44 22H6Q3 22 2 20V5Z" fill="#77777a" opacity=".6" transform="translate(1 1)" />
        <rect x="1.500" y="1.500" width="44" height="20" rx="3" fill="#fff" />
        <rect x="3" y="3" width="41" height="17" rx="2" fill="#e4531f" />
        <path d="M3 8H44V20H3Z" fill="#f0703c" />
        <path d="M3 8H7V20H3ZM40 8H44V20H40Z" fill="#cf4c1b" />
        <path d="M7 9H9V19H7Z" fill="#fab394" />
        {[11, 23.5, 36].map((cx) => <ellipse key={cx} cx={cx} cy="5" rx="5" ry="2" fill="#ee7142" stroke="#a93e14" />)}
      </svg>
    </button>
    <Divider />
    <button aria-label="My Portal" className="flex h-6 w-[86px] shrink-0 items-center justify-center">
      <svg width="26" height="24" viewBox="0 0 26 24">
        <circle cx="16" cy="9" r="7.500" fill={INK} stroke="#fff" strokeWidth="1.500" />
        <path d="M16 2V16M13 3Q10 9 13 15M19 3Q22 9 19 15" fill="none" stroke="#f8d0bf" strokeWidth="1.200" />
        <path d="M3 20Q3 14.500 8 14.500T13 20Z" fill={INK} stroke="#fff" strokeWidth="1.500" paintOrder="stroke" />
        <circle cx="8" cy="10.500" r="3" fill={INK} stroke="#fff" strokeWidth="1.500" paintOrder="stroke" />
      </svg>
    </button>
    <Divider />
    <div className="w-[25px] shrink-0" />
  </header>
);

/* ---------- palette ---------- */

const PaletteButton = ({ label, edge, children }: { label: string; edge: string; children: React.ReactNode }) => (
  <button aria-label={label} className={`flex h-[58px] w-[59px] items-start justify-center rounded border bg-[#ecece2] pt-px shadow-[1px_1px_1px_#8b8b84] ${edge}`}>
    <svg width="55" height="52" viewBox="0 0 55 52" strokeLinejoin="round">{children}</svg>
  </button>
);

const Palette = () => (
  <nav className="flex w-[77px] shrink-0 flex-col rounded-tr bg-[#cac9c0]" aria-label="Common palette">
    <h2 className="pt-[4px] pl-[5px] text-[9px] leading-[12px] font-bold text-black">Common</h2>
    <div className="flex flex-1 flex-col gap-[6px] pt-[8px] pl-2">
      <PaletteButton label="Move" edge="border-[#45a332]">
        <Gear x={37} y={12} r={10} />
        <Gear x={22} y={27} r={16} />
      </PaletteButton>
      <PaletteButton label="Record/Play" edge="border-[#45a332]">
        <circle cx="35" cy="24" r="12" fill="#77777a" opacity=".6" />
        <circle cx="34" cy="23" r="11" fill="#b13437" stroke="#8a2427" />
        <path d="M9 11V35L30 23Z" fill="#9a9a9c" stroke="#55555a" strokeWidth="1.500" />
        <path d="M10.500 13V33" stroke="#eee" />
      </PaletteButton>
      <PaletteButton label="Sound" edge="border-[#b0d232]">
        <g transform="translate(4 -1)"><Speaker /></g>
      </PaletteButton>
      <PaletteButton label="Display" edge="border-[#b0d232]">
        <rect x="10" y="6" width="36" height="35" rx="3" fill="#66666a" opacity=".8" />
        <rect x="9" y="4" width="35" height="35" rx="3" fill="#ececec" stroke="#77777a" />
        <path d="M10 31H43" stroke="#fff" strokeWidth="2" />
        <rect x="12" y="9" width="29" height="19" fill="#a6a6a8" stroke="#8b8b8e" />
      </PaletteButton>
      <PaletteButton label="Wait" edge="border-[#fda63c]">
        <path d="M15 5H39Q41 5 41 7Q41 19 29 24Q41 29 41 40Q41 43 39 43H15Q13 43 13 40Q13 29 25 24Q13 19 13 7Q13 5 15 5Z" fill="url(#metal)" stroke="#6f6f72" strokeWidth="1.500" />
        <path d="M23 7H37V15H23Z" fill="#98989b" />
        <path d="M26 24V33L37 34Q34 27 27 24Z" fill="#a0a0a3" />
        <path d="M14 37H40" stroke="#fff" strokeWidth="2" />
      </PaletteButton>
      <PaletteButton label="Loop" edge="border-[#fda63c]">
        <CycleArrows x={27} y={25} />
      </PaletteButton>
      <PaletteButton label="Switch" edge="border-[#fda63c]">
        <g fill="#f4f4f2" stroke="#6a6a6d">
          <path d="M24 16Q25 10 35 10V6L50 13L36 19V15Q32 16 31 19Z" />
          <path d="M24 29Q25 37 35 37V41L50 34L36 27V31Q32 31 31 28Z" />
          <rect x="17" y="15" width="17" height="17" fill="#a2a2a5" />
          <path d="M5 21H11V17L20 24L11 31V27H5Z" />
        </g>
        <text x="27" y="28" fontSize="10" fontWeight="bold" textAnchor="middle" fill="#eee" fontFamily="DejaVu Sans, sans-serif">?</text>
      </PaletteButton>
    </div>
    <div className="flex h-[25px] gap-[5px] bg-[#454546]">
      <button aria-label="Common blocks" className="w-[22px] rounded-br bg-[#cac9c0]">
        <svg width="22" height="24"><circle cx="10.500" cy="11.500" r="8" fill="#57b947" stroke="#2e7723" strokeWidth="1.500" /></svg>
      </button>
      <button aria-label="Complete blocks" className="w-[22px] rounded-b bg-gradient-to-b from-[#8b8b86] to-[#c6c5bc]">
        <svg width="22" height="24">
          <rect x="3" y="4" width="6" height="6" fill="#b9d232" stroke="#5c6b1c" />
          <rect x="8" y="9" width="6" height="6" fill="#fb7f1c" stroke="#a3420c" />
          <rect x="13" y="14" width="6" height="6" fill="#fbd928" stroke="#8b730c" />
        </svg>
      </button>
      <button aria-label="Custom blocks" className="flex-1 rounded-b bg-gradient-to-b from-[#8b8b86] to-[#c6c5bc]">
        <svg width="22" height="24">
          <rect x="2.500" y="3.500" width="16" height="6" rx="1" fill={TEAL} stroke="#0b5f5a" />
          <rect x="2.500" y="12.500" width="16" height="6" rx="1" fill={TEAL} stroke="#0b5f5a" />
        </svg>
      </button>
    </div>
  </nav>
);

/* ---------- editor ---------- */

const FileTab = ({ name, on }: { name: string; on?: boolean }) => (
  <button
    role="tab"
    aria-selected={!!on}
    className={`rounded-t pl-[5px] text-left text-[9px] text-black ${
      on ? "h-[19px] w-[76px] bg-white" : "h-4 w-[74px] bg-gradient-to-b from-white to-[#dadad8] pt-[2px]"
    }`}
  >
    {name}
  </button>
);

const Editor = () => (
  <main className="mr-[2px] ml-[1px] flex min-w-0 flex-1 flex-col">
    <div role="tablist" className="flex h-[22px] shrink-0 items-end gap-1 border-b border-[#9a9a9c] bg-gradient-to-b from-[#82858d] to-[#4a4a4c] pl-[3px]">
      <button aria-label="Start page" className="flex h-4 w-[19px] items-center justify-center rounded-t bg-white">
        <svg width="11" height="11">
          <rect x="2" y="2" width="7" height="7" fill="#fff" stroke="#000" strokeWidth="2" />
          <rect x="4" y="4" width="3" height="3" fill="#fbbf3c" />
          <path d="M5.500 7V11" stroke="#fff" />
        </svg>
      </button>
      <FileTab name="Remote" on />
      <FileTab name="DAZLR" />
      <FileTab name="BTRC" />
      <FileTab name="Nesting7" />
      <button aria-label="Close" className="mr-[2px] mb-1 ml-auto flex h-[14px] w-[14px] items-center justify-center rounded-xs border border-white bg-[#ee6030]">
        <svg width="10" height="10"><path d="M2 2L8 8M8 2L2 8" stroke="#fff" strokeWidth="2" /></svg>
      </button>
    </div>
    <div className="flex flex-1 rounded-b bg-white px-[2px] pt-[2px] pb-[2px]">
      <div className="relative flex-1 overflow-hidden bg-[#ecece2] bg-[linear-gradient(to_right,#e4e4db_3px,transparent_3px),linear-gradient(to_bottom,#e4e4db_3px,transparent_3px)] bg-[size:24px_24px] bg-[position:-2px_-9px]">
        <Backdrop />
        <Note x={211} y={107} lines={["Use the signed value in the variable \"Out A\" to set the", "direction (from the sign) and the power (from the", "magnitude of the number) for output port A. The MyBlock", "\"PutAngle\" converts a signed number into a direction and", "a magnitude."]} />
        <Note x={498} y={137} lines={["Do the same thing for outputs B and C – these are usually the two wheels, and so changing the values of the variables", "\"Out B\" and \"Out C\" drive or steer the vehicle."]} />
        <Note x={1065} y={370} lines={["If there's a message waiting in mailbox #4, use it to select which beep to", "make. If no new message has been recieved, just skip it and continue."]} />
        <Note x={562} y={428} lines={["Continuously loop, waiting for a BT message in mailbox #1. If a message is present, place it into", "the variable \"Out A\". This way any power/direction cammand send from the remote control is", "used to update the proper output variable (\"Out A\" uses mailbox #1, \"Out B\" uses mailbox #2,", "etc.)", "", "There are three tasks like this, one for each output, and they run in parallel so that no updates", "are missed."]} />

        <Post x={152} />
        <Block kind="variable" x={200} label="Out A" />
        <Block kind="custom" x={296} label="PutAngle" />
        <Block kind="motor" x={392} letter="A" />
        <Block kind="variable" x={488} label="Out B" />
        <Block kind="custom" x={584} label="PutAngle" selected />
        <Block kind="motor" x={680} letter="C" />
        <Block kind="variable" x={776} label="Out C" />
        <Block kind="custom" x={872} label="PutAngle" />
        <Block kind="motor" x={968} letter="B" />
        <Block kind="message" x={1064} mailbox="4" />
        <Post x={1160} mark="fork" />
        <Post x={1208} mark="fork" />
        <Block kind="sound" x={1256} />
        <Post x={1351} mark="narrow" />
        <Post x={1399} mark="narrow" />

        <Tab x={1185} y={95} on>
          <svg width="20" height="20"><Outline x={10} y={11} d="M-6 1L-3 5L5-6" w={2.5} /></svg>
        </Tab>
        <Tab x={1209} y={97}>
          <svg width="20" height="20"><Outline x={9} y={11} d="M-4-4L4 5M5-5L-5 5" w={2.5} /></svg>
        </Tab>
        <Tab x={1233} y={143} on>-1</Tab>
        <Tab x={1257} y={145}>0</Tab>
        <Tab x={1281} y={145}>+1</Tab>

        <Post x={152} y={427} />
        <Post x={200} y={427} />
        <Block kind="message" x={248} y={427} />
        <Post x={343} y={427} mark="until" />
        <Block kind="variable" x={392} y={427} label="Out A" write />
        <Post x={487} y={427} mark="forever" />

        <Post x={152} y={691} />
        <Post x={200} y={691} />
        <Block kind="message" x={248} y={691} topOnly />
        <Post x={343} y={691} />
        <Block kind="variable" x={392} y={691} topOnly />
        <Post x={487} y={691} />

        <Controller />
      </div>
    </div>
  </main>
);

/* ---------- bottom panels ---------- */

const Stepper = ({ down }: { down?: boolean }) => (
  <button aria-label={down ? "Decrease" : "Increase"} className="flex h-[7px] w-[14px] items-center justify-center rounded-xs border border-[#8b8785] bg-[#f3f1ee]">
    <svg width="8" height="4"><path d={down ? "M1 0H7L4 4Z" : "M1 4H7L4 0Z"} fill={INK} /></svg>
  </button>
);

const Inspector = () => (
  <section className="flex flex-1 rounded-r bg-[#cac9c0]">
    <div className="w-[77px] shrink-0 pl-[3px]">
      <h2 className="pt-[4px] pl-[2px] text-[9px] leading-3 font-bold text-black">PutAngle</h2>
      <svg className="mt-[5px]" width="72" height="100" viewBox="0 0 72 100" aria-hidden="true">
        <rect x="0" y="25" width="70" height="72" rx="3" fill={TEAL} />
        <rect x="14" y="6" width="42" height="18" rx="3" fill="#5e6e6c" opacity=".6" />
        <rect x="14" y="5" width="40" height="17" rx="3" fill="#14ada3" stroke="#077b74" strokeWidth="2" />
        <rect x="14" y="27" width="40" height="18" rx="3" fill="#0fa399" stroke="#077b74" strokeWidth="2" />
        <path d="M17 7.500H51M17 29.500H51" stroke="#6bd3cc" />
        <path d="M19 39Q19 32 26 32T33 39Z" fill="#e9e6e8" stroke="#55605f" />
        <circle cx="26" cy="25" r="5.500" fill="#dfdce2" stroke="#55605f" />
      </svg>
    </div>
    <div className="mt-[2px] flex h-[27px] w-[266px] items-center rounded bg-[#e6e1dd] px-[3px]">
      <svg width="20" height="20" className="rounded bg-[#cdc8cc]" aria-hidden="true"><Hash x={10} y={10} /></svg>
      <label htmlFor="angle" className="ml-[4px] text-[9px] text-black">Angle</label>
      <input id="angle" defaultValue="0" className="ml-auto h-[18px] w-[68px] rounded-xs border border-[#6e6e78] bg-white px-1 text-right text-[9px] text-black font-[family-name:'DejaVu_Sans_Condensed','DejaVu_Sans',sans-serif]" />
      <div className="ml-[3px] flex flex-col gap-[2px]">
        <Stepper />
        <Stepper down />
      </div>
    </div>
  </section>
);

const Help = () => (
  <section className="ml-[2px] flex w-[392px] shrink-0">
    <div className="w-[365px] rounded-l bg-[#cac9c0] pt-[6px] pl-[7px]">
      <article className="h-[93px] w-[351px] rounded-md bg-[#e0e1d9] px-[5px] pt-[5px] text-[#5f5f5c]">
        <h2 className="text-[12px] leading-4 font-bold">Receive Message Block</h2>
        <p className="pt-[4px] text-[10px] leading-3 whitespace-pre">
          {"To receive a wireless message, set the message type and mailbox\nnumber to match those of the sending NXT. This block’s output can\nbe the incoming message itself or a “true/false” logic value (if you\nare comparing the incoming message to a test message)."}
        </p>
        <div className="pt-[4px] text-right text-[10px] leading-3"><a href="#help" className="text-[#0b0bd8] underline">More help »</a></div>
      </article>
    </div>
    <div className="flex flex-1 flex-col gap-[5px]">
      <button aria-label="Help" className="h-[22px] w-[25px] rounded-r bg-[#cac9c0]">
        <svg width="24" height="22"><text x="12" y="17" textAnchor="middle" fontSize="16" fontWeight="bold" fontFamily="DejaVu Sans, sans-serif" fill="#fff" stroke="#55555a" strokeWidth="2" paintOrder="stroke">?</text></svg>
      </button>
      <button aria-label="Navigator" className="h-[22px] w-[24px] rounded-r bg-[#aeada5]">
        <svg width="24" height="22">
          <path d="M14 13L19 18" stroke="#66666a" strokeWidth="4.500" strokeLinecap="round" />
          <path d="M14 13L19 18" stroke="#ddd" strokeWidth="2" strokeLinecap="round" />
          <circle cx="11" cy="9" r="5.500" fill="#fff" stroke="#77777a" strokeWidth="1.500" />
        </svg>
      </button>
      <svg className="mt-auto self-end" width="15" height="15" aria-hidden="true">
        <rect width="15" height="15" fill="#fff" />
        <path d="M3 14L14 3M7 14L14 7M11 14L14 11" stroke="#8b8b8b" />
      </svg>
    </div>
  </section>
);

export default function App() {
  return (
    <div className="flex h-screen flex-col bg-[#3e3e40] font-[family-name:'DejaVu_Sans',sans-serif]">
      <Toolbar />
      <div className="mt-[2px] flex min-h-0 flex-1">
        <Palette />
        <Editor />
      </div>
      <footer className="mt-[3px] flex h-[123px] shrink-0">
        <Inspector />
        <Help />
      </footer>
      <div className="h-[3px] shrink-0 bg-[#171c25]" />
    </div>
  );
}
